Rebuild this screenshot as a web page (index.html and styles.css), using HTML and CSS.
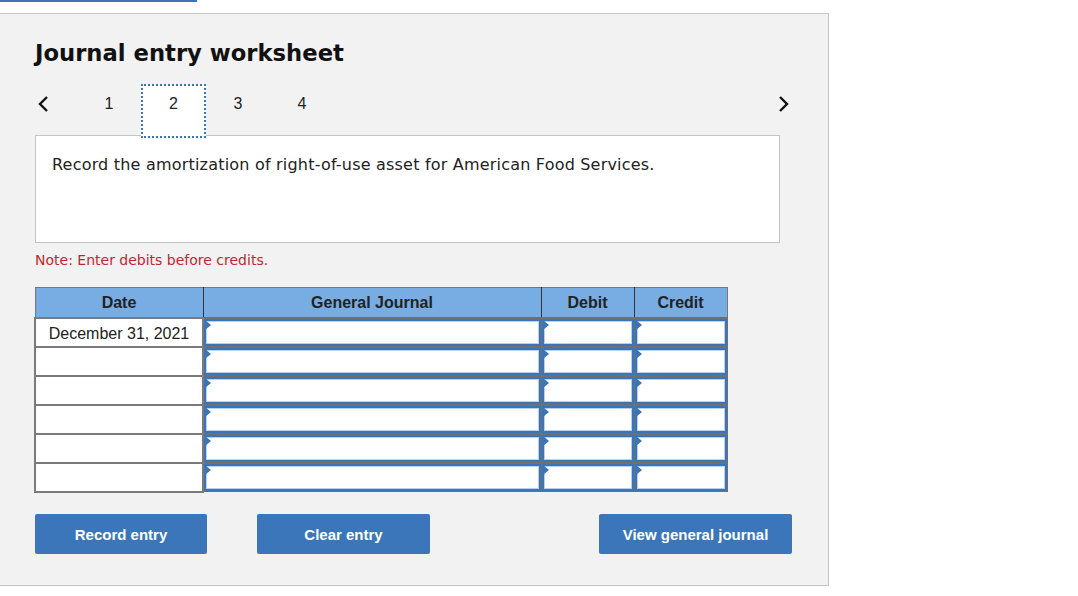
FILE: index.html
```html
<!DOCTYPE html>
<html>
<head>
<meta charset="utf-8">
<link rel="stylesheet" href="styles.css">
</head>
<body>
<div class="topbar"></div>
<div class="panel">
  <h1 class="title">Journal entry worksheet</h1>
  <div class="nav">
    <span class="arrow">
      <svg width="14" height="18" viewBox="0 0 14 18"><path d="M11 2 L4 9 L11 16" fill="none" stroke="#111" stroke-width="2.4"/></svg>
    </span>
    <div class="steps">
      <span class="step">1</span>
      <span class="step active">2</span>
      <span class="step">3</span>
      <span class="step">4</span>
    </div>
    <span class="arrow right">
      <svg width="14" height="18" viewBox="0 0 14 18"><path d="M3 2 L10 9 L3 16" fill="none" stroke="#111" stroke-width="2.4"/></svg>
    </span>
  </div>
  <div class="desc">Record the amortization of right-of-use asset for American Food Services.</div>
  <div class="note">Note: Enter debits before credits.</div>
  <table class="journal">
    <thead>
      <tr>
        <th class="c-date">Date</th>
        <th class="c-gj">General Journal</th>
        <th class="c-num">Debit</th>
        <th class="c-num">Credit</th>
      </tr>
    </thead>
    <tbody>
      <tr><td class="date">December 31, 2021</td><td class="in"><div class="box"></div></td><td class="in"><div class="box"></div></td><td class="in"><div class="box"></div></td></tr>
      <tr><td class="date"></td><td class="in"><div class="box"></div></td><td class="in"><div class="box"></div></td><td class="in"><div class="box"></div></td></tr>
      <tr><td class="date"></td><td class="in"><div class="box"></div></td><td class="in"><div class="box"></div></td><td class="in"><div class="box"></div></td></tr>
      <tr><td class="date"></td><td class="in"><div class="box"></div></td><td class="in"><div class="box"></div></td><td class="in"><div class="box"></div></td></tr>
      <tr><td class="date"></td><td class="in"><div class="box"></div></td><td class="in"><div class="box"></div></td><td class="in"><div class="box"></div></td></tr>
      <tr><td class="date"></td><td class="in"><div class="box"></div></td><td class="in"><div class="box"></div></td><td class="in"><div class="box"></div></td></tr>
    </tbody>
  </table>
  <div class="buttons">
    <button class="btn b-record">Record entry</button>
    <button class="btn b-clear">Clear entry</button>
    <button class="btn b-view">View general journal</button>
  </div>
</div>
</body>
</html>
```

FILE: styles.css
```css
html, body {
  margin: 0;
  padding: 0;
  background: #ffffff;
}
body {
  font-family: "DejaVu Sans", Verdana, sans-serif;
}
.topbar {
  width: 197px;
  height: 2px;
  background: #3a75b9;
}
.panel {
  margin-top: 11px;
  width: 829px;
  height: 573px;
  box-sizing: border-box;
  background: #f2f2f2;
  border: 1px solid #c6c6c6;
  border-left: none;
  padding: 24px 0 0 35px;
}
.title {
  margin: 0;
  font-family: "DejaVu Sans", Verdana, sans-serif;
  font-weight: bold;
  font-size: 22.7px;
  line-height: 30px;
  color: #111;
}
.nav {
  display: flex;
  align-items: flex-start;
  width: 756px;
  height: 54px;
  margin-top: 16px;
}
.arrow {
  display: flex;
  width: 14px;
  margin-left: 1px;
  margin-top: 11px;
}
.arrow.right {
  margin-left: auto;
}
.steps {
  display: flex;
  margin-left: 27px;
  height: 54px;
  align-items: stretch;
}
.step {
  width: 64px;
  display: flex;
  justify-content: center;
  padding-top: 11px;
  font-family: "Liberation Sans", Arial, sans-serif;
  font-size: 16px;
  line-height: 18px;
  color: #222;
  box-sizing: border-box;
}
.step.active {
  width: 65px;
  padding-top: 9px;
  background: #fff;
  border: 2px dotted #3a75b9;
}
.desc {
  width: 745px;
  height: 108px;
  box-sizing: border-box;
  background: #fff;
  border: 1px solid #c4c4c4;
  padding: 19px 16px;
  font-size: 16px;
  letter-spacing: 0.2px;
  line-height: 20px;
  color: #222;
  margin-top: -3px;
}
.note {
  margin-top: 8px;
  font-size: 14px;
  line-height: 18px;
  color: #c0272d;
}
.journal {
  margin-top: 18px;
  margin-left: -1px;
  border-collapse: collapse;
  font-family: "Liberation Sans", Arial, sans-serif;
  table-layout: fixed;
  width: 693px;
}
.journal th {
  background: #78ade4;
  color: #222;
  font-weight: bold;
  font-size: 16px;
  height: 30px;
  padding: 2px 0 0 0;
  border: 1px solid #333;
  border-top-color: #777;
  box-sizing: border-box;
}
.journal th:first-child { border-left-color: #777; }
.journal th:last-child { border-right-color: #777; }
.c-date { width: 168px; }
.c-gj { width: 338px; }
.c-num { width: 93px; }
.journal td {
  height: 29px;
  padding: 0;
  border: 2px solid #7a7a7a;
  background: #fff;
  box-sizing: border-box;
}
.journal td.date {
  text-align: center;
  font-size: 16px;
  color: #222;
  vertical-align: top;
  padding-top: 6px;
}
.journal td.in {
  border: 1px solid #707070;
  border-top-width: 2px;
  position: relative;
}
.box {
  height: 27px;
  box-sizing: border-box;
  border: 2px solid #3a75b9;
  box-shadow: inset 0 0 0 1px #b7d0ee;
  background: #fff;
  position: relative;
}
.box::before {
  content: "";
  position: absolute;
  left: -1px;
  top: -1px;
  width: 0;
  height: 0;
  border-top: 5px solid transparent;
  border-bottom: 5px solid transparent;
  border-left: 6px solid #3a75b9;
}
.buttons {
  display: flex;
  margin-top: 21px;
  width: 757px;
}
.btn {
  height: 40px;
  border: none;
  border-radius: 2px;
  background: #3a76b9;
  color: #fff;
  font-family: "Liberation Sans", Arial, sans-serif;
  font-weight: bold;
  font-size: 15px;
  padding: 2px 0 0 0;
}
.b-record { width: 172px; }
.b-clear { width: 173px; margin-left: 50px; }
.b-view { width: 193px; margin-left: auto; }
```
